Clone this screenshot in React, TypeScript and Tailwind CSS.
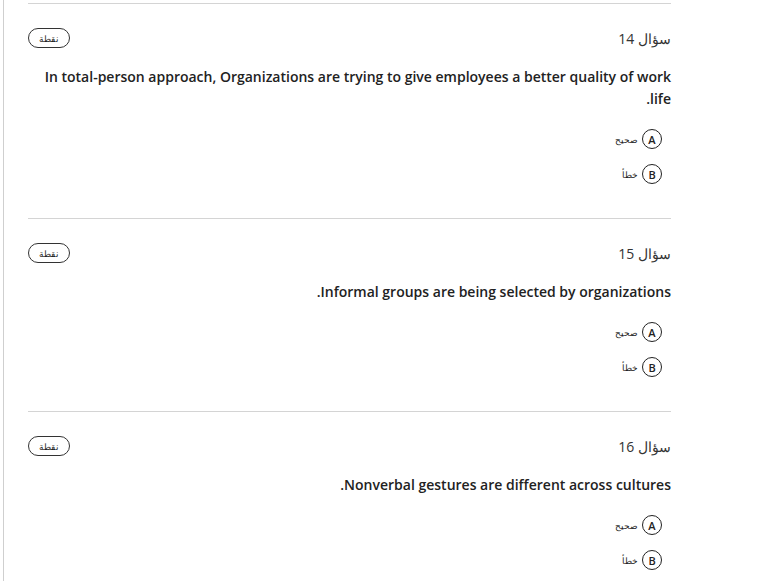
const questions = [
  {
    n: 14,
    text: 'In total-person approach, Organizations are trying to give employees a better quality of work life.',
  },
  { n: 15, text: 'Informal groups are being selected by organizations.' },
  { n: 16, text: 'Nonverbal gestures are different across cultures.' },
]

const options = [
  { key: 'A', label: 'صحيح' },
  { key: 'B', label: 'خطأ' },
]

export default function App() {
  return (
    <div className="h-[581px] w-[758px] overflow-hidden bg-white pl-[3px] font-['Open_Sans',sans-serif] text-[#222]">
      <div className="h-full w-[668px] border-l border-[#cfcfcf] pl-6">
        <div dir="rtl" className="pt-[3px]">
          {questions.map((q) => (
            <div key={q.n} className="border-t border-[#d4d4d4] pb-[34px] pt-6">
              <div className="flex h-5 items-center justify-between">
                <span className="text-[14px] text-[#333]">سؤال {q.n}</span>
                <span className="flex h-5 w-[42px] items-center justify-center rounded-full border border-[#333] text-[9px] leading-none">
                  نقطة
                </span>
              </div>
              <p className="mt-[18px] text-[14px] font-semibold leading-[22px] text-[#222]">{q.text}</p>
              <div className="mt-[19px] flex flex-col gap-[15px] pr-[9px]">
                {options.map((o) => (
                  <div key={o.key} className="flex h-5 items-center gap-1">
                    <span className="flex h-5 w-5 items-center justify-center rounded-full border border-[#222] text-[11px] font-semibold leading-none">
                      {o.key}
                    </span>
                    <span className="text-[9px] leading-none">{o.label}</span>
                  </div>
                ))}
              </div>
            </div>
          ))}
        </div>
      </div>
    </div>
  )
}
